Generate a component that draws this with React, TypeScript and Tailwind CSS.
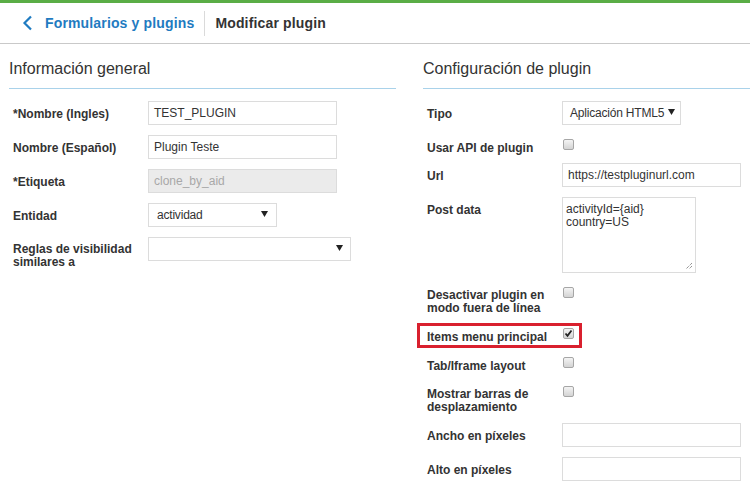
import React from 'react';

const font = "font-['Liberation_Sans',Arial,sans-serif]";

function Caret() {
  return (
    <svg width="7" height="6" viewBox="0 0 7 6" className="shrink-0 -mt-[3px]">
      <path d="M0 0 L7 0 L3.5 6 Z" fill="#222" />
    </svg>
  );
}

function Checkbox({ checked = false }: { checked?: boolean }) {
  return (
    <span className="mt-[4px] ml-px relative block w-[11px] h-[11px] rounded-[2px] border border-[#a6a6a6] bg-gradient-to-b from-[#f4f4f4] to-[#d4d4d4]">
      {checked && (
        <svg width="9" height="9" viewBox="0 0 9 9" className="absolute left-0 top-0">
          <path d="M1.5 4.5 L3.5 6.8 L7.5 1.5" stroke="#222" strokeWidth="1.8" fill="none" />
        </svg>
      )}
    </span>
  );
}

function Row({
  label,
  children,
  last,
  twoLine,
  tight,
}: {
  label: React.ReactNode;
  children?: React.ReactNode;
  last?: boolean;
  twoLine?: boolean;
  tight?: boolean;
}) {
  return (
    <div className={`flex ${last ? '' : tight ? 'mb-[9px]' : 'mb-[10px]'}`}>
      <div
        className={`w-[139px] shrink-0 pl-[4px] pr-3 text-[12px] font-bold text-[#333] ${
          twoLine ? 'pt-[6px] leading-[12.5px]' : 'pt-[7px] leading-[12px]'
        }`}
      >
        {label}
      </div>
      <div className="flex-1 min-w-0 flex items-start">{children}</div>
    </div>
  );
}

function TextInput({ value = '', width, disabled }: { value?: string; width: string; disabled?: boolean }) {
  return (
    <div
      className={`${width} h-[24px] border border-[#dcdcdc] px-[5px] flex items-center text-[12px] whitespace-nowrap ${
        disabled ? 'bg-[#ebebeb] text-[#a8a8a8]' : 'bg-white text-[#333]'
      }`}
    >
      {value}
    </div>
  );
}

function Select({ value = '', width, padding = 'pl-[8px] pr-[8px]' }: { value?: string; width: string; padding?: string }) {
  return (
    <div className={`${width} h-[24px] border border-[#dcdcdc] bg-white ${padding} flex items-center justify-between gap-1 text-[12px] text-[#333] whitespace-nowrap`}>
      <span className="tracking-[-0.2px]">{value}</span>
      <Caret />
    </div>
  );
}

function SectionTitle({ children }: { children: React.ReactNode }) {
  return (
    <div className="pt-[15px] pb-[9px] border-b border-[#a9d2ea] text-[16px] leading-[20px] text-[#333]">{children}</div>
  );
}

export default function App() {
  return (
    <div className={`w-[750px] h-[494px] overflow-hidden bg-white ${font}`}>
      <div className="h-[3px] bg-[#5aad46]" />
      <div className="h-[41px] border-b border-[#c9c9c9] flex items-center">
        <svg width="12" height="16" viewBox="0 0 12 16" className="ml-[22px] mr-[11px]">
          <path d="M9 1.5 L2.5 8 L9 14.5" stroke="#1f7bc1" strokeWidth="2.2" fill="none" />
        </svg>
        <span className="text-[14px] font-bold text-[#1f7bc1] tracking-[0.15px]">Formularios y plugins</span>
        <span className="ml-[10px] mr-[10px] w-px h-[25px] bg-[#dadada]" />
        <span className="text-[14px] font-bold text-[#333] tracking-[0.15px]">Modificar plugin</span>
      </div>

      <div className="flex pl-[9px] gap-[27px]">
        <div className="w-[387px] shrink-0">
          <SectionTitle>Información general</SectionTitle>
          <div className="mt-[12px]">
            <Row label="*Nombre (Ingles)">
              <TextInput value="TEST_PLUGIN" width="w-[189px]" />
            </Row>
            <Row label="Nombre (Español)">
              <TextInput value="Plugin Teste" width="w-[189px]" />
            </Row>
            <Row label="*Etiqueta">
              <TextInput value="clone_by_aid" width="w-[189px]" disabled />
            </Row>
            <Row label="Entidad">
              <Select value="actividad" width="w-[129px]" />
            </Row>
            <Row twoLine label={<>Reglas de visibilidad<br />similares a</>}>
              <Select width="w-[203px]" padding="pl-[8px] pr-[7px]" />
            </Row>
          </div>
        </div>

        <div className="flex-1 min-w-0">
          <SectionTitle>Configuración de plugin</SectionTitle>
          <div className="mt-[12px]">
            <Row label="Tipo">
              <Select value="Aplicación HTML5" width="w-[119px]" padding="pl-[7px] pr-[5px]" />
            </Row>
            <Row tight label="Usar API de plugin">
              <Checkbox />
            </Row>
            <Row label="Url">
              <TextInput value="https://testpluginurl.com" width="w-[179px]" />
            </Row>
            <Row label="Post data">
              <div className="relative w-[134px] h-[76px] border border-[#dcdcdc] bg-white px-[3px] pt-[5px] text-[12px] leading-[13px] text-[#333]">
                activityId={'{aid}'}
                <br />
                country=US
                <svg width="8" height="8" viewBox="0 0 8 8" className="absolute right-[2px] bottom-[2px]">
                  <path d="M7 1 L1 7 M7 4 L4 7" stroke="#666" strokeWidth="1" strokeDasharray="1 1" />
                </svg>
              </div>
            </Row>
            <Row twoLine label={<>Desactivar plugin en<br />modo fuera de línea</>}>
              <Checkbox />
            </Row>
            <div className="relative">
              <div className="absolute left-[-6px] top-[-1px] w-[165px] h-[25px] border-[3px] border-[#d9202e] pointer-events-none" />
              <Row label="Items menu principal">
                <Checkbox checked />
              </Row>
            </div>
            <Row label="Tab/Iframe layout">
              <Checkbox />
            </Row>
            <Row twoLine label={<>Mostrar barras de<br />desplazamiento</>}>
              <Checkbox />
            </Row>
            <Row label="Ancho en píxeles">
              <TextInput width="w-[179px]" />
            </Row>
            <Row label="Alto en píxeles" last>
              <TextInput width="w-[179px]" />
            </Row>
          </div>
        </div>
      </div>
    </div>
  );
}
